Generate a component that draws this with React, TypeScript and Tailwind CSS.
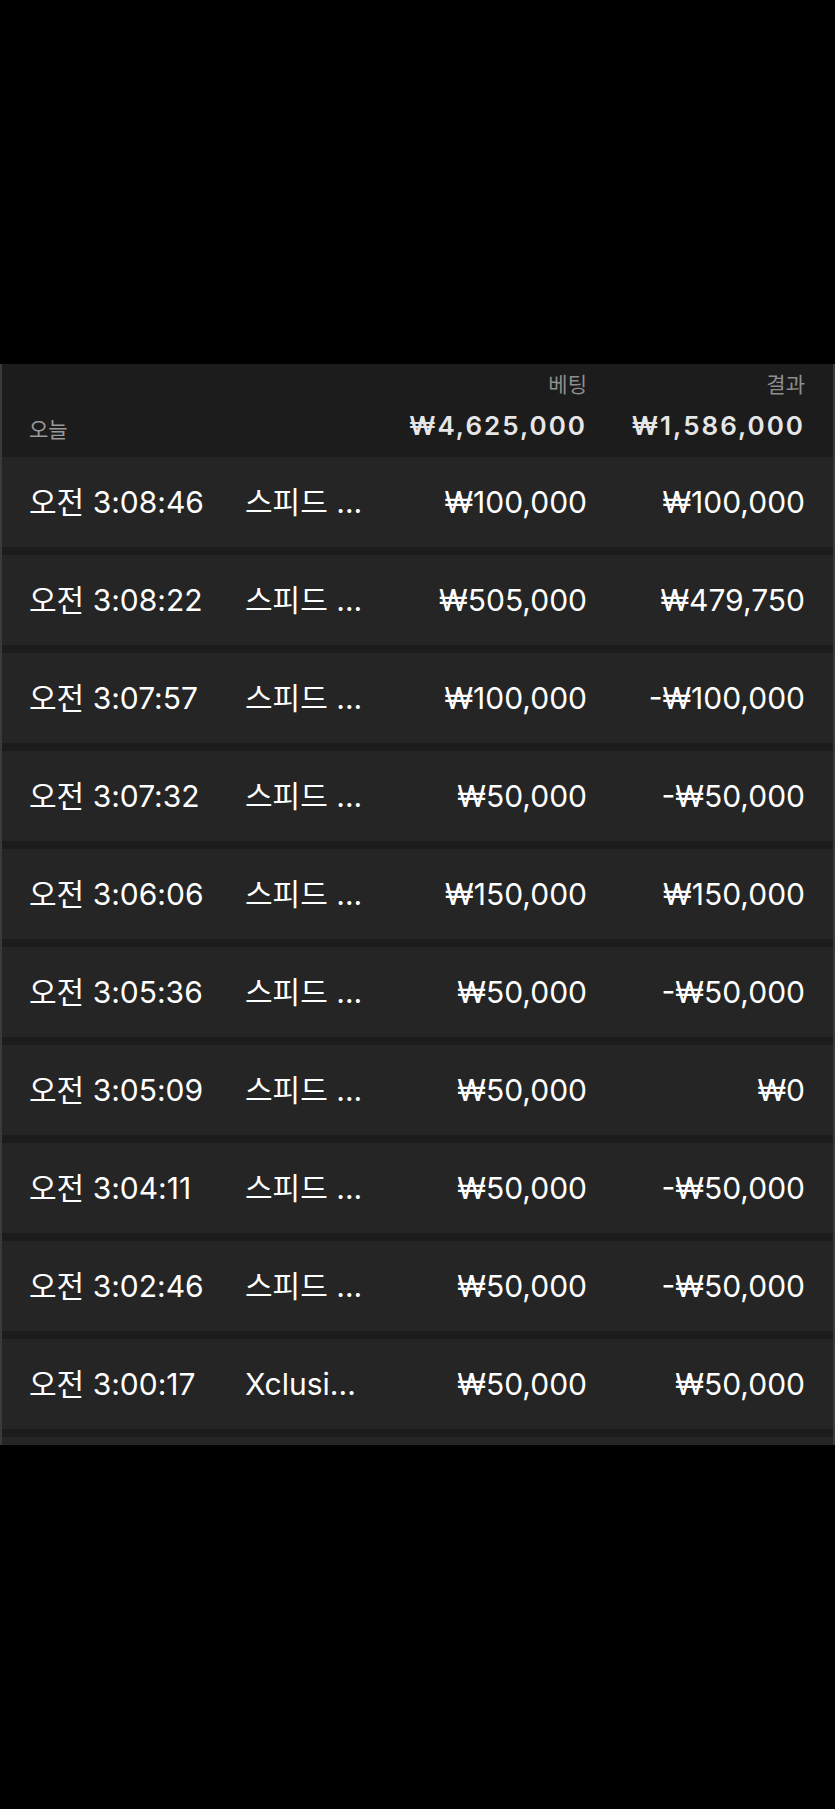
import React from "react";

const rows: [string, string, string, string][] = [
  ["오전 3:08:46", "스피드 ...", "₩100,000", "₩100,000"],
  ["오전 3:08:22", "스피드 ...", "₩505,000", "₩479,750"],
  ["오전 3:07:57", "스피드 ...", "₩100,000", "-₩100,000"],
  ["오전 3:07:32", "스피드 ...", "₩50,000", "-₩50,000"],
  ["오전 3:06:06", "스피드 ...", "₩150,000", "₩150,000"],
  ["오전 3:05:36", "스피드 ...", "₩50,000", "-₩50,000"],
  ["오전 3:05:09", "스피드 ...", "₩50,000", "₩0"],
  ["오전 3:04:11", "스피드 ...", "₩50,000", "-₩50,000"],
  ["오전 3:02:46", "스피드 ...", "₩50,000", "-₩50,000"],
  ["오전 3:00:17", "Xclusi...", "₩50,000", "₩50,000"],
];

export default function App() {
  return (
    <div
      className="w-[835px] h-[1809px] bg-black overflow-hidden"
      style={{ fontFamily: '"Inter", "Noto Sans CJK KR", sans-serif' }}
    >
      <div className="h-[364px]" />
      <div className="h-[1081px] overflow-hidden bg-[#1c1c1c] border-x-2 border-[#3a3a3a]">
        <div className="h-[93px] flex pl-[27px] pr-[28px]">
          <div className="w-[216px] flex items-end pb-[12px] text-[21px] text-[#9a9a9a]">오늘</div>
          <div className="w-[122px]" />
          <div className="w-[220px] flex flex-col items-end">
            <div className="mt-[6px] h-[29px] text-[21px] text-[#8e8e8e] leading-[29px]">베팅</div>
            <div className="mt-[12px] text-[26px] leading-[30px] font-semibold tracking-[2px] text-[#e6e6e6]">₩4,625,000</div>
          </div>
          <div className="flex-1 flex flex-col items-end">
            <div className="mt-[6px] h-[29px] text-[21px] text-[#8e8e8e] leading-[29px]">결과</div>
            <div className="mt-[12px] text-[26px] leading-[30px] font-semibold tracking-[2px] text-[#e6e6e6]">₩1,586,000</div>
          </div>
        </div>
        {rows.map((r, i) => (
          <div
            key={i}
            className={`h-[90px] flex items-center pl-[27px] pr-[28px] bg-[#252525] text-white text-[30px] ${i > 0 ? "mt-[8px]" : ""}`}
          >
            <div className="w-[216px] whitespace-nowrap">{r[0]}</div>
            <div className="w-[122px] whitespace-nowrap">{r[1]}</div>
            <div className="w-[220px] text-right whitespace-nowrap">{r[2]}</div>
            <div className="flex-1 text-right whitespace-nowrap">{r[3]}</div>
          </div>
        ))}
        <div className="h-[90px] mt-[8px] bg-[#252525]" />
      </div>
    </div>
  );
}
